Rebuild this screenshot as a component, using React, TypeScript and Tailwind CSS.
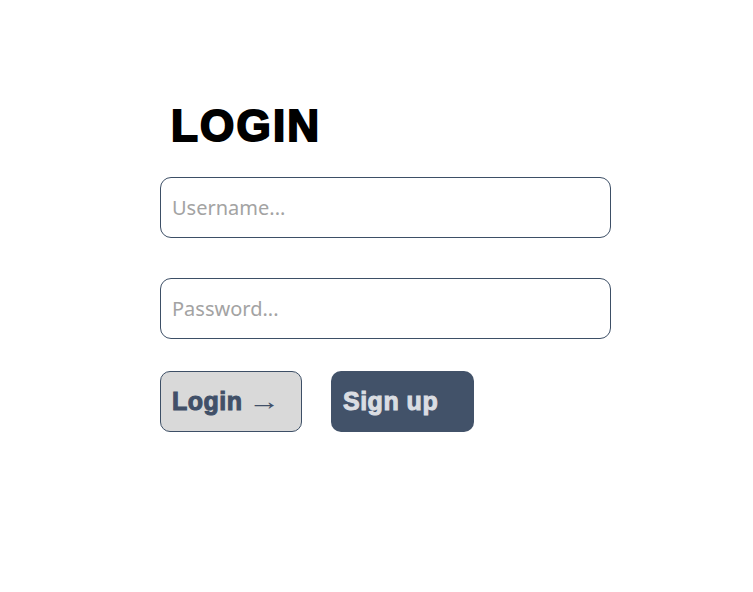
import React from 'react';

export default function App() {
  return (
    <div className="min-h-screen bg-white pl-[160px] pt-[98px]">
      <div className="flex w-[451px] flex-col">
        <h1 className="ml-[11px] font-['Liberation_Sans',Arial,sans-serif] text-[44px] font-bold leading-[56px] tracking-[2.2px] text-black [-webkit-text-stroke:2px_black]">
          LOGIN
        </h1>

        <input
          type="text"
          placeholder="Username..."
          className="mt-[23px] h-[61px] w-full rounded-[11px] border border-[#3d4f66] px-[11px] font-['Noto_Sans',sans-serif] text-[20px] text-[#333] placeholder:text-[#a3a3a3] outline-none"
        />

        <input
          type="password"
          placeholder="Password..."
          className="mt-[40px] h-[61px] w-full rounded-[11px] border border-[#3d4f66] px-[11px] font-['Noto_Sans',sans-serif] text-[20px] text-[#333] placeholder:text-[#a3a3a3] outline-none"
        />

        <div className="mt-[32px] flex gap-[29px]">
          <button className="flex h-[61px] w-[142px] items-center rounded-[10px] border border-[#3d4f66] bg-[#d9d9d9] px-[11px] font-['Liberation_Sans',Arial,sans-serif] text-[25px] font-bold tracking-[0.5px] text-[#415068]">
            <span className="[-webkit-text-stroke:1px_#415068]">Login</span>
            <span className="ml-[5px] inline-block origin-left scale-x-[1.3] font-normal">→</span>
          </button>
          <button className="flex h-[61px] w-[143px] items-center rounded-[10px] bg-[#425269] px-[12px] font-['Liberation_Sans',Arial,sans-serif] text-[25px] font-bold tracking-[0.5px] text-[#dadde2] [-webkit-text-stroke:1px_#dadde2]">
            Sign up
          </button>
        </div>
      </div>
    </div>
  );
}
